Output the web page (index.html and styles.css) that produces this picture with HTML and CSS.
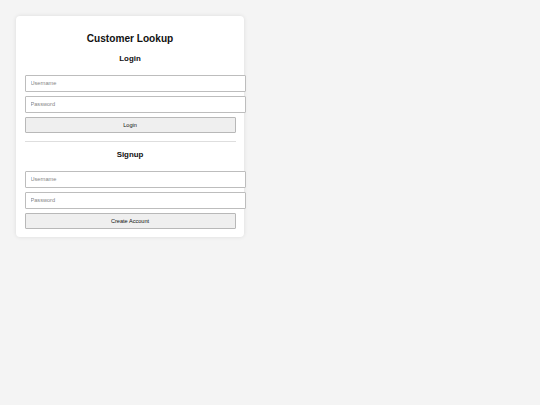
FILE: index.html
```html
<!DOCTYPE html>
<html lang="en">
<head>
<meta charset="utf-8">
<title>Customer Lookup</title>
<link rel="stylesheet" href="styles.css">
</head>
<body>
<div class="card">
  <h2 class="title">Customer Lookup</h2>
  <section class="section">
    <h3 class="section-title">Login</h3>
    <input class="field" type="text" placeholder="Username">
    <input class="field" type="password" placeholder="Password">
    <button class="btn" type="button">Login</button>
  </section>
  <hr class="divider">
  <section class="section">
    <h3 class="section-title signup-title">Signup</h3>
    <input class="field" type="text" placeholder="Username">
    <input class="field" type="password" placeholder="Password">
    <button class="btn" type="button">Create Account</button>
  </section>
</div>
</body>
</html>
```

FILE: styles.css
```css
html, body {
  margin: 0;
  padding: 0;
}
body {
  background: #f4f4f4;
  font-family: "Liberation Sans", Arial, sans-serif;
  padding: 16px;
  color: #111;
}
.card {
  width: 228px;
  box-sizing: border-box;
  padding: 8.5px;
  background: #fff;
  border-radius: 4px;
  box-shadow: 0 0 4px rgba(0, 0, 0, 0.1);
}
.title {
  margin: 8.2px 0 0;
  font-size: 10.125px;
  line-height: 12px;
  text-align: center;
  font-weight: bold;
}
.section-title {
  margin: 9.4px 0 11.5px;
  font-size: 7.9px;
  line-height: 9px;
  text-align: center;
  font-weight: bold;
}
.signup-title {
  margin-top: 8px;
}
.field {
  display: block;
  box-sizing: border-box;
  width: 221px;
  height: 17px;
  margin: 0 0 4px;
  padding: 0 5px;
  border: 1px solid #bdbdbd;
  border-radius: 1px;
  background: #fff;
  font-family: "Liberation Sans", Arial, sans-serif;
  font-size: 5.6px;
  color: #111;
  outline: none;
}
.field::placeholder {
  color: #858585;
}
.btn {
  display: block;
  box-sizing: border-box;
  width: 100%;
  height: 16.3px;
  margin: 0;
  padding: 0;
  border: 1px solid #b8b8b8;
  border-radius: 1px;
  background: #efefef;
  font-family: "Liberation Sans", Arial, sans-serif;
  font-size: 5.6px;
  color: #111;
}
.divider {
  margin: 8.2px 0 0;
  border: 0;
  height: 1px;
  background: #dedede;
}
```
